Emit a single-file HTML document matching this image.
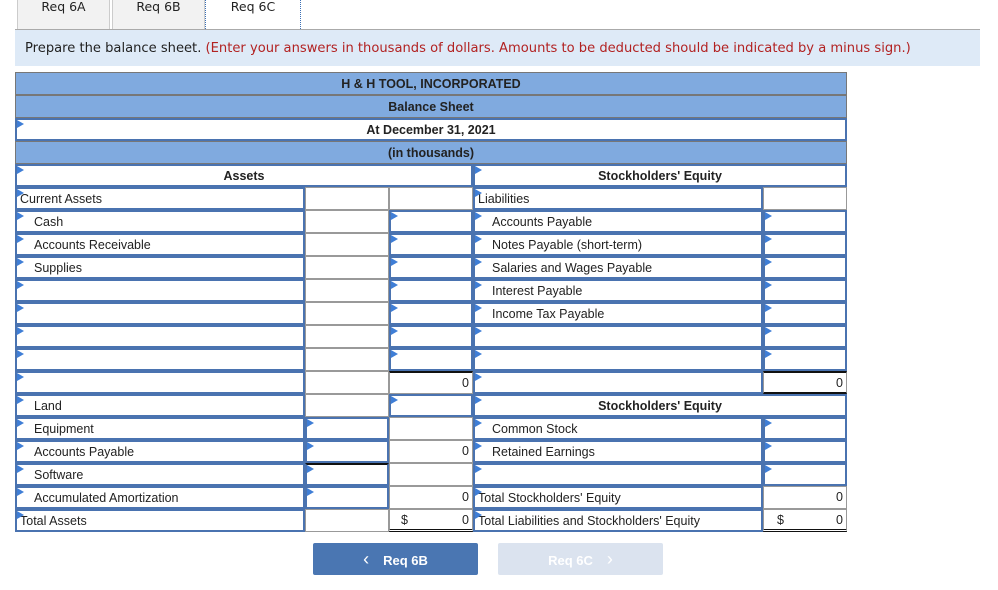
<!DOCTYPE html>
<html><head><meta charset="utf-8"><style>
body{margin:0;width:998px;height:590px;background:#fff;position:relative;overflow:hidden;font-family:"Liberation Sans",Arial,sans-serif;color:#222}
.a{position:absolute;box-sizing:border-box}
.tab{position:absolute;top:0;height:30px;background:#f2f2f2;border:1px solid #ccc;border-top:none;font-family:"DejaVu Sans",sans-serif;font-size:12.5px;text-align:center;line-height:14px;box-sizing:border-box}
.c{position:absolute;box-sizing:border-box;height:23px;font-size:12.5px;line-height:21px;padding:0 3px;white-space:nowrap;background:#fff}
.i{border:2px solid #4a73b0}
.i::before{content:"";position:absolute;left:0;top:0;border-left:7px solid #3f7ed6;border-top:4px solid transparent;border-bottom:4px solid transparent}
.p{border:1px solid #999}
.r{text-align:right}
.ind{padding-left:17px}
.h{font-weight:bold;text-align:center}
.bl{position:absolute;left:15px;width:832px;height:23px;background:#80aadf;border:1px solid #777;box-sizing:border-box;font-size:12.5px;font-weight:bold;text-align:center;line-height:22px}
</style></head><body>
<div class="tab" style="left:17px;width:93px">Req 6A</div>
<div class="tab" style="left:112px;width:93px">Req 6B</div>
<div class="a" style="left:205px;top:0;width:96px;height:31px;background:#fff;border:1px dotted #3a6fb5;border-top:none;font-family:'DejaVu Sans',sans-serif;font-size:12.5px;text-align:center;line-height:14px">Req 6C</div>
<div class="a" style="left:15px;top:29px;width:965px;height:1px;background:#aaa"></div>
<div class="a" style="left:15px;top:30px;width:965px;height:36px;background:#deeaf7;font-family:'DejaVu Sans',sans-serif;font-size:13.1px;line-height:37px;padding-left:10px;white-space:nowrap">Prepare the balance sheet. <span style="color:#b22222">(Enter your answers in thousands of dollars. Amounts to be deducted should be indicated by a minus sign.)</span></div>

<div class="bl" style="top:72px">H &amp; H TOOL, INCORPORATED</div>
<div class="bl" style="top:95px">Balance Sheet</div>
<div class="c i h" style="left:15px;top:118px;width:832px">At December 31, 2021</div>
<div class="bl" style="top:141px">(in thousands)</div>
<div class="c i h" style="left:15px;top:164px;width:458px">Assets</div>
<div class="c i h" style="left:473px;top:164px;width:374px">Stockholders' Equity</div>

<div class="c i" style="left:15px;top:187px;width:290px">Current Assets</div>
<div class="c p" style="left:305px;top:187px;width:84px"></div>
<div class="c p" style="left:389px;top:187px;width:84px"></div>
<div class="c i" style="left:473px;top:187px;width:290px">Liabilities</div>
<div class="c p" style="left:763px;top:187px;width:84px"></div>

<div class="c i ind" style="left:15px;top:210px;width:290px">Cash</div>
<div class="c p" style="left:305px;top:210px;width:84px"></div>
<div class="c i" style="left:389px;top:210px;width:84px"></div>
<div class="c i ind" style="left:473px;top:210px;width:290px">Accounts Payable</div>
<div class="c i" style="left:763px;top:210px;width:84px"></div>

<div class="c i ind" style="left:15px;top:233px;width:290px">Accounts Receivable</div>
<div class="c p" style="left:305px;top:233px;width:84px"></div>
<div class="c i" style="left:389px;top:233px;width:84px"></div>
<div class="c i ind" style="left:473px;top:233px;width:290px">Notes Payable (short-term)</div>
<div class="c i" style="left:763px;top:233px;width:84px"></div>

<div class="c i ind" style="left:15px;top:256px;width:290px">Supplies</div>
<div class="c p" style="left:305px;top:256px;width:84px"></div>
<div class="c i" style="left:389px;top:256px;width:84px"></div>
<div class="c i ind" style="left:473px;top:256px;width:290px">Salaries and Wages Payable</div>
<div class="c i" style="left:763px;top:256px;width:84px"></div>

<div class="c i" style="left:15px;top:279px;width:290px"></div>
<div class="c p" style="left:305px;top:279px;width:84px"></div>
<div class="c i" style="left:389px;top:279px;width:84px"></div>
<div class="c i ind" style="left:473px;top:279px;width:290px">Interest Payable</div>
<div class="c i" style="left:763px;top:279px;width:84px"></div>

<div class="c i" style="left:15px;top:302px;width:290px"></div>
<div class="c p" style="left:305px;top:302px;width:84px"></div>
<div class="c i" style="left:389px;top:302px;width:84px"></div>
<div class="c i ind" style="left:473px;top:302px;width:290px">Income Tax Payable</div>
<div class="c i" style="left:763px;top:302px;width:84px"></div>

<div class="c i" style="left:15px;top:325px;width:290px"></div>
<div class="c p" style="left:305px;top:325px;width:84px"></div>
<div class="c i" style="left:389px;top:325px;width:84px"></div>
<div class="c i" style="left:473px;top:325px;width:290px"></div>
<div class="c i" style="left:763px;top:325px;width:84px"></div>

<div class="c i" style="left:15px;top:348px;width:290px"></div>
<div class="c p" style="left:305px;top:348px;width:84px"></div>
<div class="c i" style="left:389px;top:348px;width:84px"></div>
<div class="c i" style="left:473px;top:348px;width:290px"></div>
<div class="c i" style="left:763px;top:348px;width:84px"></div>

<div class="c i" style="left:15px;top:371px;width:290px"></div>
<div class="c p" style="left:305px;top:371px;width:84px"></div>
<div class="c p r" style="left:389px;top:371px;width:84px;border-top:2px solid #111">0</div>
<div class="c i" style="left:473px;top:371px;width:290px"></div>
<div class="c p r" style="left:763px;top:371px;width:84px;border-top:2px solid #111;border-bottom:2px solid #111">0</div>

<div class="c i ind" style="left:15px;top:394px;width:290px">Land</div>
<div class="c p" style="left:305px;top:394px;width:84px"></div>
<div class="c i" style="left:389px;top:394px;width:84px"></div>
<div class="c i h" style="left:473px;top:394px;width:374px">Stockholders' Equity</div>

<div class="c i ind" style="left:15px;top:417px;width:290px">Equipment</div>
<div class="c i" style="left:305px;top:417px;width:84px"></div>
<div class="c p" style="left:389px;top:417px;width:84px"></div>
<div class="c i ind" style="left:473px;top:417px;width:290px">Common Stock</div>
<div class="c i" style="left:763px;top:417px;width:84px"></div>

<div class="c i ind" style="left:15px;top:440px;width:290px">Accounts Payable</div>
<div class="c i" style="left:305px;top:440px;width:84px"></div>
<div class="c p r" style="left:389px;top:440px;width:84px">0</div>
<div class="c i ind" style="left:473px;top:440px;width:290px">Retained Earnings</div>
<div class="c i" style="left:763px;top:440px;width:84px"></div>

<div class="c i ind" style="left:15px;top:463px;width:290px">Software</div>
<div class="c i" style="left:305px;top:463px;width:84px;border-top:2px solid #111"></div>
<div class="c p" style="left:389px;top:463px;width:84px"></div>
<div class="c i" style="left:473px;top:463px;width:290px"></div>
<div class="c i" style="left:763px;top:463px;width:84px"></div>

<div class="c i ind" style="left:15px;top:486px;width:290px">Accumulated Amortization</div>
<div class="c i" style="left:305px;top:486px;width:84px"></div>
<div class="c p r" style="left:389px;top:486px;width:84px">0</div>
<div class="c i" style="left:473px;top:486px;width:290px">Total Stockholders' Equity</div>
<div class="c p r" style="left:763px;top:486px;width:84px">0</div>

<div class="c i" style="left:15px;top:509px;width:290px">Total Assets</div>
<div class="c p" style="left:305px;top:509px;width:84px"></div>
<div class="c p r" style="left:389px;top:509px;width:84px;border-bottom:3px double #111"><span style="float:left;padding-left:8px">$</span>0</div>
<div class="c i" style="left:473px;top:509px;width:290px">Total Liabilities and Stockholders' Equity</div>
<div class="c p r" style="left:763px;top:509px;width:84px;border-bottom:3px double #111"><span style="float:left;padding-left:10px">$</span>0</div>

<div class="a" style="left:313px;top:543px;width:165px;height:32px;background:#4a76b2;border-radius:2px;color:#fff;font-size:13px;font-weight:bold;text-align:center;line-height:32px"><span style="font-weight:normal;font-size:18px;margin-right:14px">&#8249;</span>Req 6B</div>
<div class="a" style="left:498px;top:543px;width:165px;height:32px;background:#dbe3ef;border-radius:2px;color:#fff;font-size:13px;font-weight:bold;text-align:center;line-height:32px">Req 6C<span style="font-weight:normal;font-size:18px;margin-left:14px">&#8250;</span></div>
</body></html>
